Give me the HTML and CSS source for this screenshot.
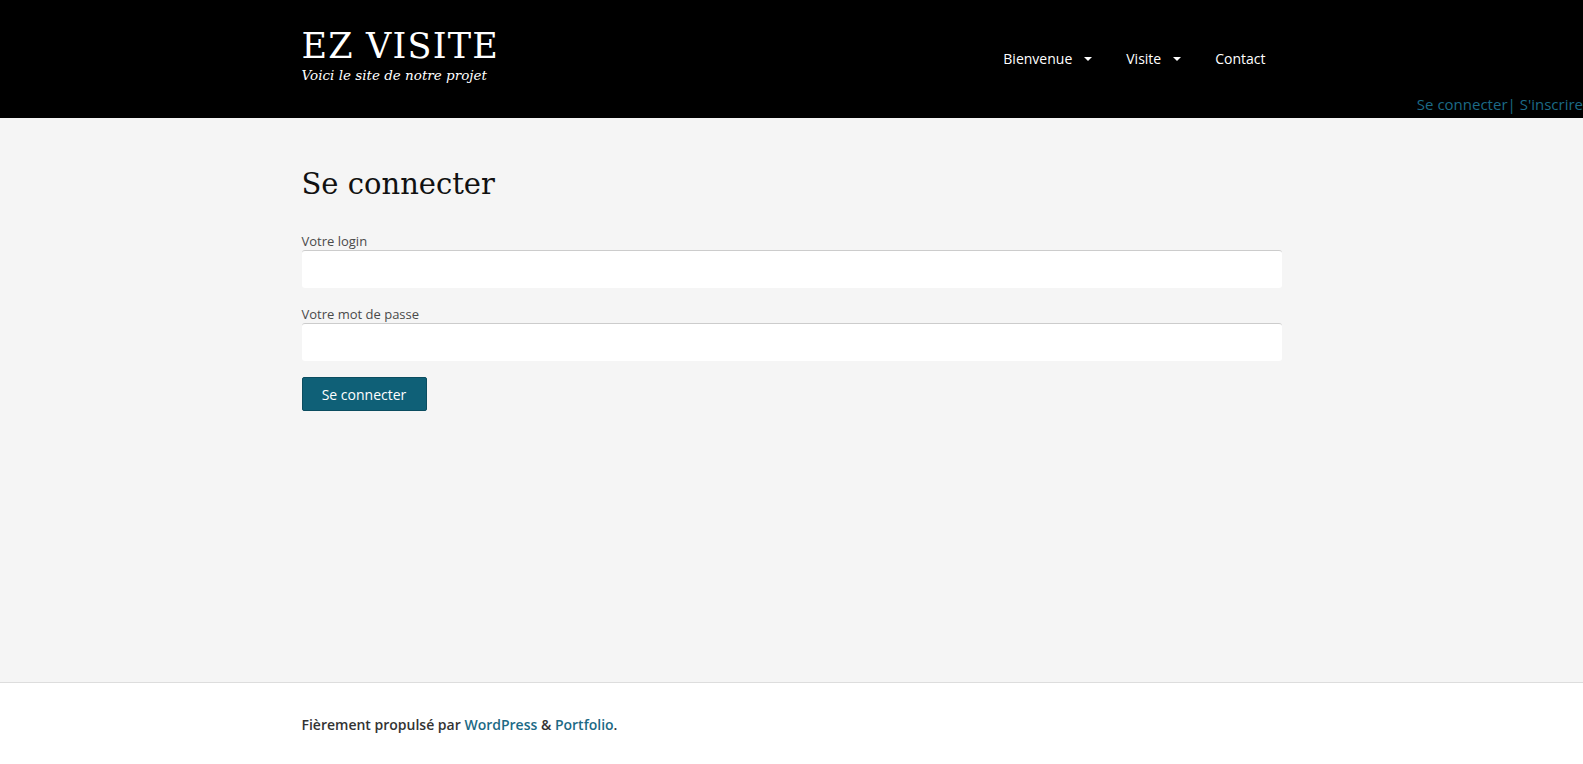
FILE: index.html
```html
<!DOCTYPE html>
<html lang="fr">
<head>
<meta charset="utf-8">
<title>Se connecter – EZ VISITE</title>
<link rel="stylesheet" href="styles.css">
</head>
<body>
<header class="site-header">
  <div class="container header-inner">
    <div class="branding">
      <h1 class="site-title">EZ VISITE</h1>
      <p class="site-desc">Voici le site de notre projet</p>
    </div>
    <nav class="main-nav">
      <a href="#" class="nav-item">Bienvenue <span class="caret"></span></a>
      <a href="#" class="nav-item">Visite <span class="caret"></span></a>
      <a href="#" class="nav-item">Contact</a>
    </nav>
  </div>
  <div class="account-links"><a href="#">Se connecter</a><span class="sep">|</span> <a href="#">S'inscrire</a></div>
</header>
<main class="site-main">
  <div class="container">
    <h2 class="page-title">Se connecter</h2>
    <form class="login-form">
      <label class="field-label">Votre login</label>
      <input class="field-input" type="text">
      <label class="field-label">Votre mot de passe</label>
      <input class="field-input" type="password">
      <button class="btn" type="button">Se connecter</button>
    </form>
  </div>
</main>
<footer class="site-footer">
  <div class="container footer-text">Fièrement propulsé par <a href="#">WordPress</a> &amp; <a href="#">Portfolio</a>.</div>
</footer>
</body>
</html>
```
FILE: styles.css
```css
* { box-sizing: border-box; }
html, body { margin: 0; padding: 0; }
body {
  font-family: "Open Sans", "DejaVu Sans", sans-serif;
  background: #f5f5f5;
  color: #333;
  min-height: 764px;
  display: flex;
  flex-direction: column;
}
.container { width: 980px; margin: 0 auto; }
.site-header {
  background: #000;
  height: 118px;
  position: relative;
}
.header-inner {
  display: flex;
  justify-content: space-between;
  align-items: flex-start;
  padding-top: 26px;
}
.site-title {
  margin: 0;
  font-family: "DejaVu Serif", "Liberation Serif", serif;
  font-weight: normal;
  font-size: 35px;
  line-height: 40px;
  color: #fff;
  letter-spacing: 1.2px;
}
.site-desc {
  margin: 1px 0 0;
  font-family: "DejaVu Serif", "Liberation Serif", serif;
  font-style: italic;
  font-size: 13.5px;
  color: #fff;
}
.main-nav {
  display: flex;
  padding-top: 23px;
  margin-right: 16px;
}
.nav-item {
  color: #fff;
  text-decoration: none;
  font-size: 14px;
  line-height: 20px;
  margin-left: 34px;
  display: flex;
  align-items: center;
}
.caret {
  display: inline-block;
  width: 0; height: 0;
  border-left: 4px solid transparent;
  border-right: 4px solid transparent;
  border-top: 4px solid #fff;
  margin-left: 12px;
}
.account-links {
  position: absolute;
  right: 0;
  bottom: 4px;
  font-size: 15px;
  line-height: 20px;
  color: #1c6a86;
}
.account-links a { color: #1c6a86; text-decoration: none; }
.site-main { flex: 1; padding-top: 46px; }
.page-title {
  margin: 0 0 29px;
  font-family: "DejaVu Serif", "Liberation Serif", serif;
  font-weight: normal;
  font-size: 29px;
  line-height: 40px;
  color: #111;
}
.login-form { display: flex; flex-direction: column; align-items: flex-start; }
.field-label {
  font-size: 13px;
  line-height: 16px;
  color: #4a4a4a;
  margin-bottom: 1px;
}
.field-input {
  width: 100%;
  height: 38px;
  border: none;
  border-top: 1px solid #ccc;
  border-radius: 3px;
  background: #fff;
  margin: 0 0 18px;
}
.btn {
  margin-top: -2px;
  width: 125px;
  height: 34px;
  background: #0f6077;
  color: #fff;
  border: 1px solid #0b4d60;
  border-radius: 2px;
  font-family: "Open Sans", sans-serif;
  font-size: 14px;
  cursor: pointer;
}
.site-footer {
  background: #fff;
  border-top: 1px solid #ddd;
  height: 82px;
  padding-top: 32px;
}
.footer-text {
  font-size: 14px;
  font-weight: 600;
  color: #333;
}
.footer-text a { color: #1c6a86; text-decoration: none; }
```
